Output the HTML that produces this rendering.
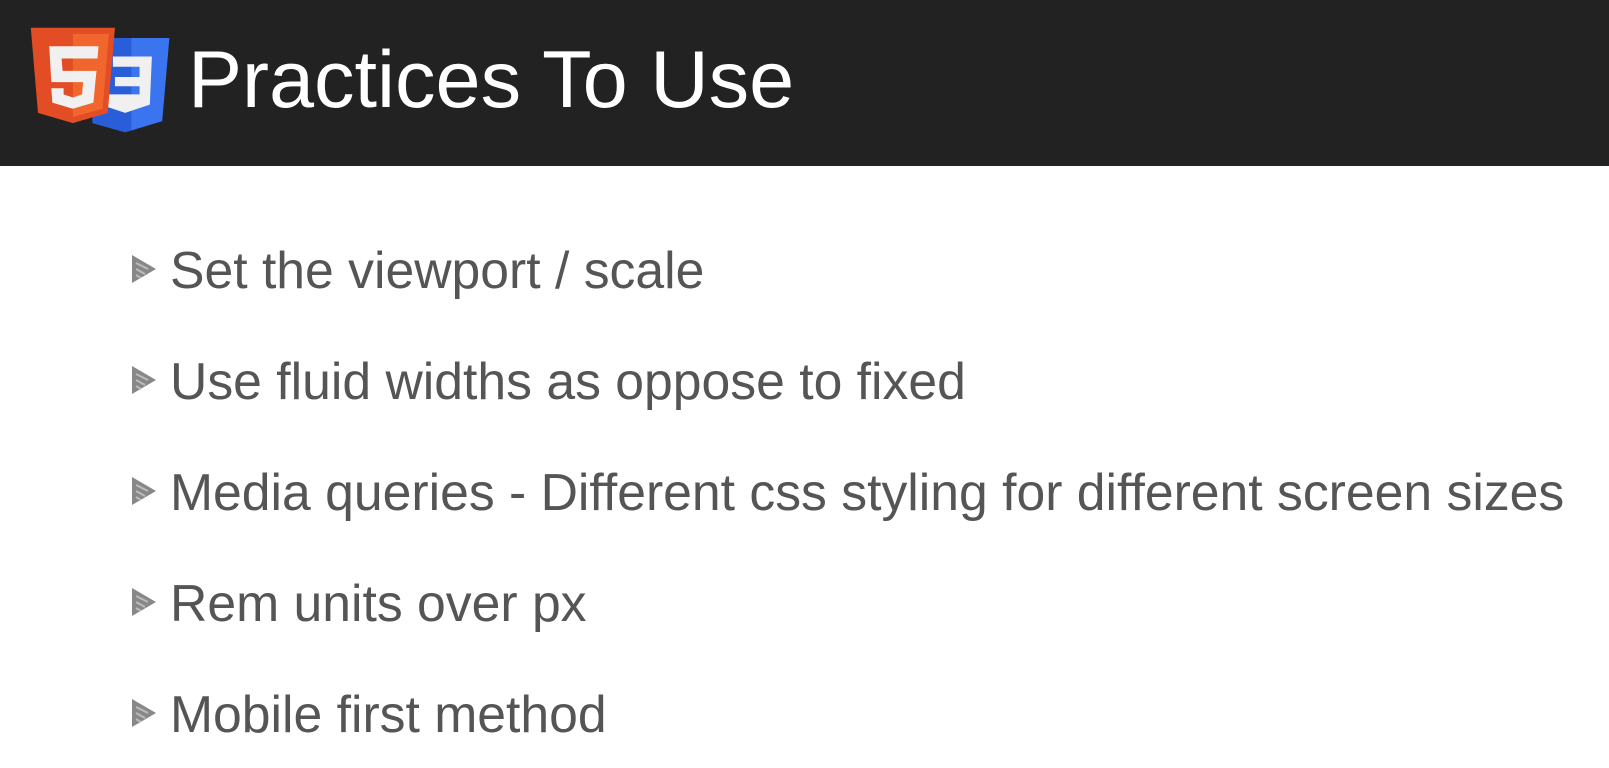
<!DOCTYPE html>
<html><head><style>
body{margin:0;width:1609px;height:768px;background:#fff;overflow:hidden;font-family:"Liberation Sans",Arial,sans-serif;position:relative}
.hd{position:absolute;left:0;top:0;width:1609px;height:166px;background:#222}
.t{position:absolute;left:188px;top:30px;font-size:81px;color:#fff;line-height:100px;white-space:nowrap}
.b{position:absolute;left:170px;font-size:51.7px;color:#555;line-height:50px;white-space:nowrap}
.tri{position:absolute;left:131px}
</style></head><body>
<div class="hd">
<svg style="position:absolute;left:0;top:0" width="180" height="140" viewBox="0 0 175.4 136.4">
<path d="M90 37 L165 37 L158 118 L122 129 L90 120Z" fill="#2a5ed8"/>
<path d="M128 37 L165 37 L158 118 L128 127Z" fill="#3a74ee"/>
<path d="M110 55 L148 55 L146 102 L122 110 L104 104 L104 92 L136 92 L136 84 L112 84 L112 75 L136 75 L136 65 L110 65Z" fill="#f0f0f0"/>
<path d="M30 27 L112 27 L105 110 L71 120 L37 110Z" fill="#e24d26"/>
<path d="M71 33 L106 33 L100 106 L71 114Z" fill="#f0662c"/>
<path d="M48 45 L96 45 L95 57 L60 57 L61 69 L94 69 L91 100 L71 106 L51 100 L50 86 L62 86 L62 92 L71 95 L80 92 L81 80 L50 80Z" fill="#f0f0f0"/>
</svg>
<div class="t">Practices To Use</div>
</div>
<svg class="tri" style="top:254px" width="26" height="30"><path d="M1 1 L25 15 L1 29Z" fill="#888"/><path d="M5 9 L17 15 M5 15 L14 20 M5 21 L10 24" stroke="#bbb" stroke-width="2"/></svg>
<div class="b" style="top:245px">Set the viewport / scale</div>
<svg class="tri" style="top:365px" width="26" height="30"><path d="M1 1 L25 15 L1 29Z" fill="#888"/><path d="M5 9 L17 15 M5 15 L14 20 M5 21 L10 24" stroke="#bbb" stroke-width="2"/></svg>
<div class="b" style="top:356px">Use fluid widths as oppose to fixed</div>
<svg class="tri" style="top:476px" width="26" height="30"><path d="M1 1 L25 15 L1 29Z" fill="#888"/><path d="M5 9 L17 15 M5 15 L14 20 M5 21 L10 24" stroke="#bbb" stroke-width="2"/></svg>
<div class="b" style="top:467px">Media queries - Different css styling for different screen sizes</div>
<svg class="tri" style="top:587px" width="26" height="30"><path d="M1 1 L25 15 L1 29Z" fill="#888"/><path d="M5 9 L17 15 M5 15 L14 20 M5 21 L10 24" stroke="#bbb" stroke-width="2"/></svg>
<div class="b" style="top:578px">Rem units over px</div>
<svg class="tri" style="top:698px" width="26" height="30"><path d="M1 1 L25 15 L1 29Z" fill="#888"/><path d="M5 9 L17 15 M5 15 L14 20 M5 21 L10 24" stroke="#bbb" stroke-width="2"/></svg>
<div class="b" style="top:689px">Mobile first method</div>
</body></html>
